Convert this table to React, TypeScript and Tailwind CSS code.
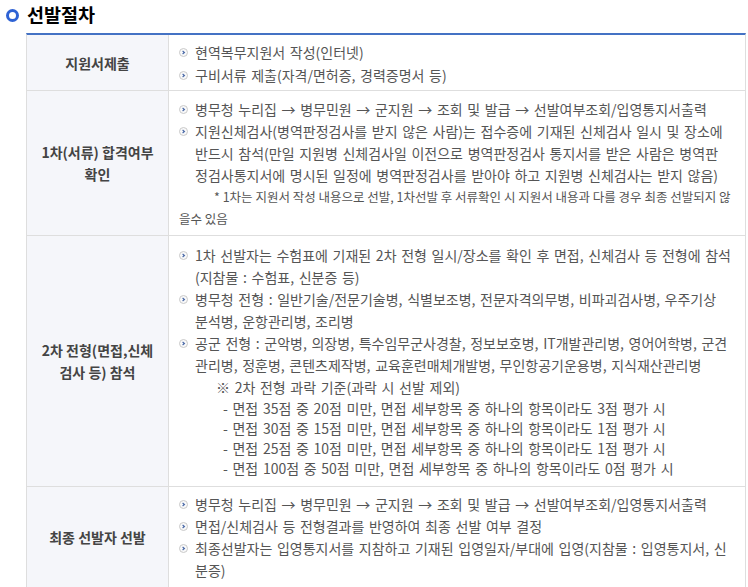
import React from 'react';

const FONT = { fontFamily: '"Noto Sans CJK KR", "Noto Sans", sans-serif' };

const Bullet: React.FC = () => (
  <svg width="9" height="9" viewBox="0 0 9 9" className="shrink-0 mt-[7px]">
    <circle cx="4.5" cy="4.5" r="4" fill="#fafafa" stroke="#c9c9c9" strokeWidth="1" />
    <path d="M3.6 3 L5.4 4.5 L3.6 6" fill="none" stroke="#4b6aa8" strokeWidth="1.2" />
  </svg>
);

const Item: React.FC<{ lines: string[]; children?: React.ReactNode }> = ({ lines, children }) => (
  <div className="flex gap-[7px]">
    <Bullet />
    <div className="whitespace-nowrap">
      {lines.map((l, i) => (
        <div key={i}>{l}</div>
      ))}
      {children}
    </div>
  </div>
);

const Row: React.FC<{ head: React.ReactNode; pad: string; children: React.ReactNode; last?: boolean }> = ({
  head,
  pad,
  children,
  last,
}) => (
  <div className={`grid grid-cols-[142px_1fr] ${last ? '' : 'border-b border-[#dedede]'}`}>
    <div className="flex items-center justify-center text-center bg-[#f5f6fa] border-r border-[#dedede] font-bold text-[#444] text-[14px] leading-[22px]">
      {head}
    </div>
    <div
      className={`pl-[10px] pr-1 text-[14px] leading-[22px] text-[#555] [word-spacing:1.5px] overflow-hidden ${pad}`}
    >
      {children}
    </div>
  </div>
);

const ARROW_PATH = '병무청 누리집 → 병무민원 → 군지원 → 조회 및 발급 → 선발여부조회/입영통지서출력';

export default function App() {
  return (
    <div className="w-[748px] h-[587px] bg-white overflow-hidden" style={FONT}>
      <div className="flex items-center h-[33px] pb-[3px] pl-[6px] gap-[8px]">
        <div className="w-[13px] h-[13px] rounded-full border-[3px] border-[#2e62d4]" />
        <h2 className="text-[18.5px] font-bold text-black">선발절차</h2>
      </div>

      <div className="ml-[26px] w-[720px] border-t-2 border-t-[#4472c4] border-x border-b border-x-[#dedede] border-b-[#dedede]">
        <Row head="지원서제출" pad="pt-[6px] pb-[4px]">
          <Item lines={['현역복무지원서 작성(인터넷)']} />
          <div className="mt-[1px]">
            <Item lines={['구비서류 제출(자격/면허증, 경력증명서 등)']} />
          </div>
        </Row>

        <Row
          head={
            <span>
              1차(서류) 합격여부
              <br />
              확인
            </span>
          }
          pad="pt-[7px] pb-[5px]"
        >
          <Item lines={[ARROW_PATH]} />
          <Item
            lines={[
              '지원신체검사(병역판정검사를 받지 않은 사람)는 접수증에 기재된 신체검사 일시 및 장소에',
              '반드시 참석(만일 지원병 신체검사일 이전으로 병역판정검사 통지서를 받은 사람은 병역판',
              '정검사통지서에 명시된 일정에 병역판정검사를 받아야 하고 지원병 신체검사는 받지 않음)',
            ]}
          />
          <div className="text-[12.5px] whitespace-nowrap [word-spacing:0px]">
            <div className="pl-[35px]">* 1차는 지원서 작성 내용으로 선발, 1차선발 후 서류확인 시 지원서 내용과 다를 경우 최종 선발되지 않</div>
            <div>을수 있음</div>
          </div>
        </Row>

        <Row
          head={
            <span>
              2차 전형(면접,신체
              <br />
              검사 등) 참석
            </span>
          }
          pad="pt-[8px] pb-[8px]"
        >
          <Item
            lines={[
              '1차 선발자는 수험표에 기재된 2차 전형 일시/장소를 확인 후 면접, 신체검사 등 전형에 참석',
              '(지참물 : 수험표, 신분증 등)',
            ]}
          />
          <Item
            lines={[
              '병무청 전형 : 일반기술/전문기술병, 식별보조병, 전문자격의무병, 비파괴검사병, 우주기상',
              '분석병, 운항관리병, 조리병',
            ]}
          />
          <Item
            lines={[
              '공군 전형 : 군악병, 의장병, 특수임무군사경찰, 정보보호병, IT개발관리병, 영어어학병, 군견',
              '관리병, 정훈병, 콘텐츠제작병, 교육훈련매체개발병, 무인항공기운용병, 지식재산관리병',
            ]}
          >
            <div className="pl-[21px]">※ 2차 전형 과락 기준(과락 시 선발 제외)</div>
            <div className="pl-[28px] leading-[20px]">
              <div>- 면접 35점 중 20점 미만, 면접 세부항목 중 하나의 항목이라도 3점 평가 시</div>
              <div>- 면접 30점 중 15점 미만, 면접 세부항목 중 하나의 항목이라도 1점 평가 시</div>
              <div>- 면접 25점 중 10점 미만, 면접 세부항목 중 하나의 항목이라도 1점 평가 시</div>
              <div>- 면접 100점 중 50점 미만, 면접 세부항목 중 하나의 항목이라도 0점 평가 시</div>
            </div>
          </Item>
        </Row>

        <Row head="최종 선발자 선발" pad="pt-[6px] pb-[6px]" last>
          <Item lines={[ARROW_PATH]} />
          <Item lines={['면접/신체검사 등 전형결과를 반영하여 최종 선발 여부 결정']} />
          <Item
            lines={[
              '최종선발자는 입영통지서를 지참하고 기재된 입영일자/부대에 입영(지참물 : 입영통지서, 신',
              '분증)',
            ]}
          />
        </Row>
      </div>
    </div>
  );
}
